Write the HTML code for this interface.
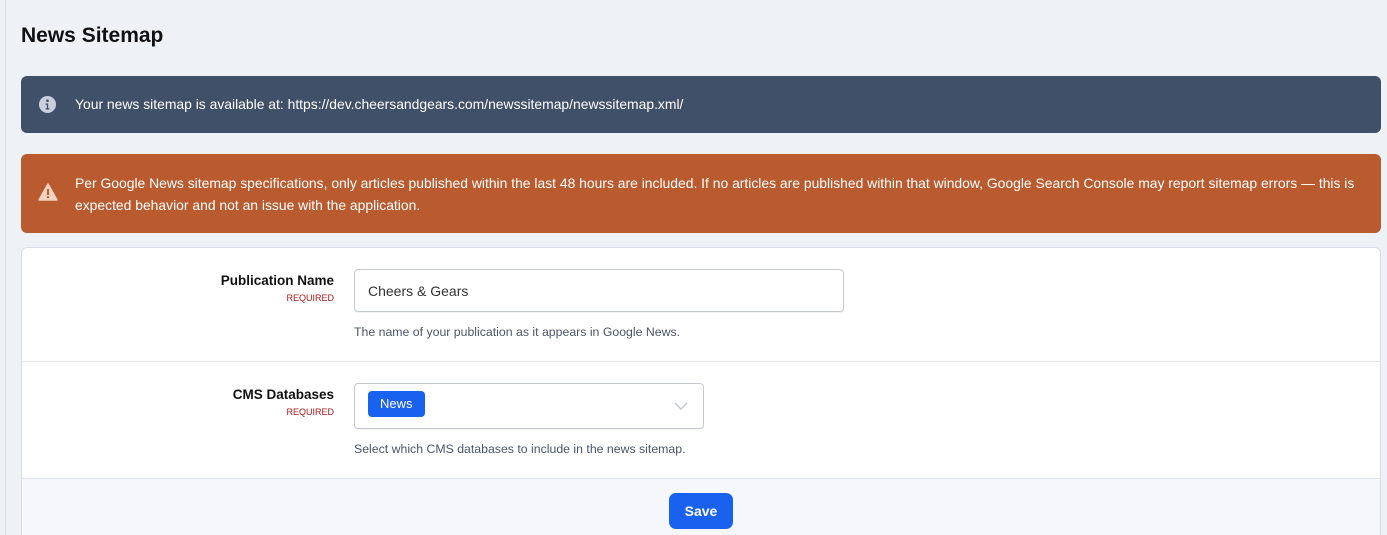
<!DOCTYPE html>
<html style="overflow:hidden"><head><style>
html,body{overflow:hidden}
body{margin:0;width:1387px;height:535px;overflow:hidden;background:#eef1f6;font-family:"Liberation Sans",sans-serif;position:relative}
.lb{position:absolute;left:5px;top:0;width:1px;height:535px;background:#d8dce6}
h1{position:absolute;left:21px;top:24px;margin:0;font-size:21px;font-weight:bold;color:#111}
.al{position:absolute;left:21px;width:1360px;border-radius:6px;color:#fff;font-size:13.9px}
.info{top:76px;height:57px;background:#405069}
.warn{top:154px;height:79px;background:#b95b2f}
.txt{position:absolute;left:54px;line-height:22px}
.card{position:absolute;left:21px;top:247px;width:1358px;height:300px;border:1px solid #d9dde8;border-radius:6px;background:#fff;overflow:hidden}
.row{position:absolute;left:0;width:1358px;border-bottom:1px solid #e3e6ec}
.lab{position:absolute;right:1046px;text-align:right;font-weight:bold;font-size:13.5px;color:#111}
.req{display:block;font-size:9px;color:#b01818;font-weight:normal;margin-top:5px}
.inp{position:absolute;left:332px;border:1px solid #c5c9d2;border-radius:4px;background:#fff;box-shadow:0 1px 1px rgba(0,0,0,.05)}
.help{position:absolute;left:332px;font-size:12.3px;color:#4a5568}
.foot{position:absolute;left:0;top:231px;width:1358px;height:80px;background:#f5f7fb}
.btn{position:absolute;left:647px;top:14px;width:64px;height:36px;border-radius:7px;background:#1961ef;color:#fff;font-weight:bold;font-size:14px;text-align:center;line-height:36px}
</style></head><body>
<div class="lb"></div>
<h1>News Sitemap</h1>
<div class="al info">
<svg style="position:absolute;left:17px;top:19px" width="19" height="19" viewBox="0 0 20 20"><circle cx="10" cy="10" r="9" fill="#c9cfdb"/><circle cx="10" cy="6" r="1.4" fill="#405069"/><path d="M8 9h2.7v5h1.3v1.3H8V14h1.3v-3.7H8z" fill="#405069"/></svg>
<div class="txt" style="top:17px">Your news sitemap is available at: https://dev.cheersandgears.com/newssitemap/newssitemap.xml/</div></div>
<div class="al warn">
<svg style="position:absolute;left:17px;top:29px" width="20" height="18" viewBox="0 0 20 18"><path d="M10 1L19 17H1z" fill="#f0d3c5" stroke="#f0d3c5" stroke-linejoin="round" stroke-width="1.5"/><rect x="9" y="6" width="2" height="6" fill="#b95b2f"/><rect x="9" y="13.3" width="2" height="2" fill="#b95b2f"/></svg>
<div class="txt" style="top:18px">Per Google News sitemap specifications, only articles published within the last 48 hours are included. If no articles are published within that window, Google Search Console may report sitemap errors — this is<br>expected behavior and not an issue with the application.</div></div>
<div class="card" style="height:300px">
<div class="row" style="top:0;height:113px">
<div class="lab" style="top:25px">Publication Name<span class="req">REQUIRED</span></div>
<div class="inp" style="top:21px;width:488px;height:41px"><span style="position:absolute;left:13px;top:13px;font-size:14px;color:#333">Cheers &amp; Gears</span></div>
<div class="help" style="top:77px">The name of your publication as it appears in Google News.</div>
</div>
<div class="row" style="top:114px;height:116px">
<div class="lab" style="top:25px">CMS Databases<span class="req">REQUIRED</span></div>
<div class="inp" style="top:21px;width:348px;height:44px"><span style="position:absolute;left:13px;top:7px;background:#1961ef;color:#fff;font-size:13px;padding:0 12px;height:26px;line-height:26px;border-radius:4px">News</span>
<svg style="position:absolute;left:319px;top:18px" width="14" height="9" viewBox="0 0 14 9"><path d="M1 1l6 6 6-6" fill="none" stroke="#c4c8d0" stroke-width="1.5"/></svg></div>
<div class="help" style="top:80px">Select which CMS databases to include in the news sitemap.</div>
</div>
<div class="foot"><div class="btn">Save</div></div>
</div>
</body></html>
